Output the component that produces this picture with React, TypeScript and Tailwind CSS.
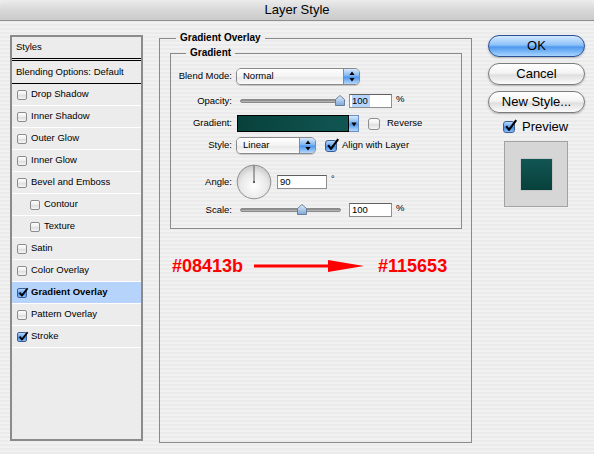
import React from 'react';

type Row = { label: string; indent?: boolean; checked?: boolean; selected?: boolean };

const styleRows: Row[] = [
  { label: 'Drop Shadow' },
  { label: 'Inner Shadow' },
  { label: 'Outer Glow' },
  { label: 'Inner Glow' },
  { label: 'Bevel and Emboss' },
  { label: 'Contour', indent: true },
  { label: 'Texture', indent: true },
  { label: 'Satin' },
  { label: 'Color Overlay' },
  { label: 'Gradient Overlay', checked: true, selected: true },
  { label: 'Pattern Overlay' },
  { label: 'Stroke', checked: true },
];

// aqua checkbox, small for the list, large for the dialog
const CheckBox = ({ checked, big }: { checked?: boolean; big?: boolean }) => {
  const size = big ? 'w-[12px] h-[12px] rounded-[3px]' : 'w-[10px] h-[10px] rounded-[2px]';
  const skin = checked
    ? 'border-[#3b5e98] bg-[linear-gradient(#b9d8fb,#5d9ded_50%,#3c86e2_51%,#8cc0f7)]'
    : 'border-[#8c8c8c] bg-[linear-gradient(#ffffff,#ececec_50%,#dcdcdc_51%,#f6f6f6)]';
  return (
    <span className={`relative inline-block shrink-0 border ${size} ${skin}`}>
      {checked && big && (
        <svg className="absolute left-[0px] top-[-3px]" width="14" height="14" viewBox="0 0 14 14">
          <path d="M2.2 7.2 L5 10.8 L12.2 1.2" stroke="#000" strokeWidth="2.1" fill="none" strokeLinejoin="round" />
        </svg>
      )}
      {checked && !big && (
        <svg className="absolute left-[0px] top-[-2px]" width="11" height="11" viewBox="0 0 11 11">
          <path d="M1.6 5.6 L3.9 8.6 L9.6 1.2" stroke="#000" strokeWidth="1.8" fill="none" strokeLinejoin="round" />
        </svg>
      )}
    </span>
  );
};

const PopUp = ({ label, width }: { label: string; width: string }) => (
  <div className={`flex h-[17px] overflow-hidden rounded-[5px] border border-[#8a8a8a] shadow-[0_1px_1px_rgba(0,0,0,0.18)] ${width}`}>
    <div className="flex flex-1 items-center bg-[linear-gradient(#ffffff,#f3f3f3_50%,#e6e6e6_51%,#fbfbfb)] pl-[6px] text-[9.5px]">
      {label}
    </div>
    <div className="flex w-[16px] items-center justify-center border-l border-[#6b8fc4] bg-[linear-gradient(#d6e8fd,#79b2f2_48%,#4a93ea_52%,#b4d8fd)]">
      <svg width="6" height="11" viewBox="0 0 6 11">
        <path d="M3 0.5 L5.6 4 H0.4 Z M3 10.5 L5.6 7 H0.4 Z" fill="#000" />
      </svg>
    </div>
  </div>
);

const Slider = ({ thumb }: { thumb: string }) => (
  <div className="relative ml-[4px] h-[14px] w-[105px]">
    <div className="absolute left-0 right-[4px] top-[5px] h-[4px] rounded-full border border-[#8a8a8a] bg-[linear-gradient(#7d7d7d,#c4c4c4)]" />
    <svg className={`absolute top-[1px] ${thumb}`} width="10" height="11" viewBox="0 0 10 11">
      <defs>
        <linearGradient id="thumb" x1="0" y1="0" x2="0" y2="1">
          <stop offset="0" stopColor="#e3eefc" />
          <stop offset="1" stopColor="#7ea7d8" />
        </linearGradient>
      </defs>
      <path d="M5 0.5 L9.5 4.5 V10.5 H0.5 V4.5 Z" fill="url(#thumb)" stroke="#5f7590" strokeWidth="0.9" />
    </svg>
  </div>
);

const Field = ({ value, width, hilite }: { value: string; width: string; hilite?: boolean }) => (
  <div className={`flex h-[14px] items-center border border-[#8f8f8f] border-t-[#5f5f5f] bg-white pl-[2px] text-[9.5px] ${width}`}>
    <span className={hilite ? 'bg-[#b5d5ff] pr-[2px] leading-[12px]' : 'leading-[12px]'}>{value}</span>
  </div>
);

const Label = ({ children }: { children: React.ReactNode }) => (
  <div className="w-[61px] shrink-0 text-right text-[9.5px]">{children}</div>
);

const Dial = () => (
  <svg width="36" height="36" viewBox="0 0 36 36">
    <defs>
      <radialGradient id="dial" cx="0.5" cy="0.62" r="0.6">
        <stop offset="0" stopColor="#ffffff" />
        <stop offset="0.65" stopColor="#e9e9e9" />
        <stop offset="1" stopColor="#c9c9c9" />
      </radialGradient>
    </defs>
    <circle cx="18" cy="18" r="16.8" fill="url(#dial)" stroke="#8e8e8e" strokeWidth="1" />
    <line x1="18" y1="18" x2="18" y2="1.5" stroke="#5a5a5a" strokeWidth="1" />
    <rect x="17" y="17" width="2" height="2" fill="#5a5a5a" />
  </svg>
);

const AquaButton = ({ label, primary }: { label: string; primary?: boolean }) => (
  <div
    className={`flex h-[22px] w-[97px] items-center justify-center rounded-full border text-[13px] shadow-[0_1px_2px_rgba(0,0,0,0.25)] ${
      primary
        ? 'border-[#2d4f93] bg-[linear-gradient(#d4e9ff,#8cc1f8_45%,#4f98ef_55%,#a6d4ff)]'
        : 'border-[#7b7b7b] bg-[linear-gradient(#ffffff,#f4f4f4_45%,#dfdfdf_55%,#fbfbfb)]'
    }`}
  >
    {label}
  </div>
);

export default function App() {
  return (
    <div className="flex h-[454px] w-[594px] flex-col overflow-hidden bg-[repeating-linear-gradient(#ebebeb_0px,#ebebeb_2px,#f1f1f1_2px,#f1f1f1_4px)] font-['Liberation_Sans',Arial,sans-serif] text-black">
      {/* title bar */}
      <div className="flex h-[21px] shrink-0 items-center justify-center rounded-t-[5px] border-b border-[#8e8e8e] bg-[linear-gradient(#ececec,#d8d8d8_50%,#cbcbcb)] text-[13px]">
        Layer Style
      </div>

      <div className="flex flex-1">
        {/* styles list */}
        <div className="ml-[10px] mt-[14px] h-[406px] w-[133px] shrink-0 border-2 border-[#8b8b8b] bg-[#ececec]">
          <div className="flex h-[24px] items-center border-b-[3px] border-double border-black pl-[4px] text-[9.5px]">
            Styles
          </div>
          <div className="flex h-[23px] items-center border-b border-black pl-[4px] text-[9.5px]">
            Blending Options: Default
          </div>
          {styleRows.map((row) => (
            <div
              key={row.label}
              className={`flex h-[22px] items-center gap-[4px] border-b border-white text-[9.5px] ${
                row.indent ? 'pl-[18px]' : 'pl-[5px]'
              } ${row.selected ? 'bg-[#b6d4fb] font-bold' : ''}`}
            >
              <CheckBox checked={row.checked} />
              <span>{row.label}</span>
            </div>
          ))}
        </div>

        {/* gradient overlay */}
        <fieldset className="ml-[16px] mt-[11px] h-[411px] w-[313px] shrink-0 border border-[#8a8a8a]">
          <legend className="ml-[16px] px-[4px] text-[10px] font-bold leading-[12px]">Gradient Overlay</legend>

          <fieldset className="ml-[10px] mt-[3px] w-[292px] border border-[#8a8a8a] pb-[11px]">
            <legend className="ml-[15px] px-[4px] text-[10px] font-bold leading-[12px]">Gradient</legend>

            <div className="mt-[9px] flex h-[17px] items-center gap-[4px]">
              <Label>Blend Mode:</Label>
              <PopUp label="Normal" width="w-[124px]" />
            </div>

            <div className="mt-[9px] flex h-[14px] items-center gap-[4px]">
              <Label>Opacity:</Label>
              <Slider thumb="left-[95px]" />
              <Field value="100" width="w-[43px]" hilite />
              <span className="self-start text-[9.5px] leading-[10px]">%</span>
            </div>

            <div className="mt-[7px] flex h-[17px] items-center">
              <Label>Gradient:</Label>
              <div className="ml-[5px] flex h-[17px]">
                <div className="w-[112px] border border-black bg-[linear-gradient(90deg,#08413b,#115653)]" />
                <div className="flex w-[10px] items-end justify-center border-y border-r border-[#6b8fc4] bg-[linear-gradient(#d6e8fd,#79b2f2_48%,#4a93ea_52%,#b4d8fd)] pb-[4px]">
                  <svg width="6" height="5" viewBox="0 0 6 5">
                    <path d="M0.3 0.5 H5.7 L3 4.5 Z" fill="#000" />
                  </svg>
                </div>
              </div>
              <div className="ml-[9px] flex items-center gap-[7px] text-[9.5px]">
                <CheckBox big />
                <span>Reverse</span>
              </div>
            </div>

            <div className="mt-[5px] flex h-[17px] items-center gap-[4px]">
              <Label>Style:</Label>
              <PopUp label="Linear" width="w-[80px]" />
              <div className="ml-[5px] flex items-center gap-[5px] text-[9.5px]">
                <CheckBox checked big />
                <span>Align with Layer</span>
              </div>
            </div>

            <div className="mt-[10px] flex h-[36px] items-center gap-[4px]">
              <Label>Angle:</Label>
              <Dial />
              <div className="ml-[1px] flex items-start gap-[4px]">
                <Field value="90" width="w-[50px]" />
                <span className="text-[9px] leading-[8px]">°</span>
              </div>
            </div>

            <div className="mt-[3px] flex h-[14px] items-center gap-[4px]">
              <Label>Scale:</Label>
              <Slider thumb="left-[57px]" />
              <Field value="100" width="w-[43px]" />
              <span className="self-start text-[9.5px] leading-[10px]">%</span>
            </div>
          </fieldset>

          {/* colour note */}
          <div className="ml-[12px] mt-[26px] flex h-[22px] items-center text-[18px] font-bold text-[#ff0000]">
            <span>#08413b</span>
            <svg className="ml-[11px]" width="111" height="14" viewBox="0 0 111 14">
              <rect x="0" y="5.5" width="78" height="3" fill="#ff0000" />
              <path d="M74 1 L110 7 L74 13 Z" fill="#ff0000" />
            </svg>
            <span className="ml-[13px]">#115653</span>
          </div>
        </fieldset>

        {/* buttons and preview */}
        <div className="ml-[16px] mt-[14px] flex w-[97px] shrink-0 flex-col">
          <AquaButton label="OK" primary />
          <div className="mt-[6px]">
            <AquaButton label="Cancel" />
          </div>
          <div className="mt-[6px]">
            <AquaButton label="New Style..." />
          </div>
          <div className="ml-[15px] mt-[7px] flex h-[14px] items-center gap-[7px] text-[13px]">
            <CheckBox checked big />
            <span>Preview</span>
          </div>
          <div className="ml-[16px] mt-[7px] flex h-[66px] w-[64px] items-center justify-center border border-[#a3a3a3] bg-[#d6d6d6]">
            <div className="h-[31px] w-[31px] bg-[linear-gradient(#115653,#08413b)] shadow-[0_0_1px_rgba(0,0,0,0.4)]" />
          </div>
        </div>
      </div>
    </div>
  );
}
